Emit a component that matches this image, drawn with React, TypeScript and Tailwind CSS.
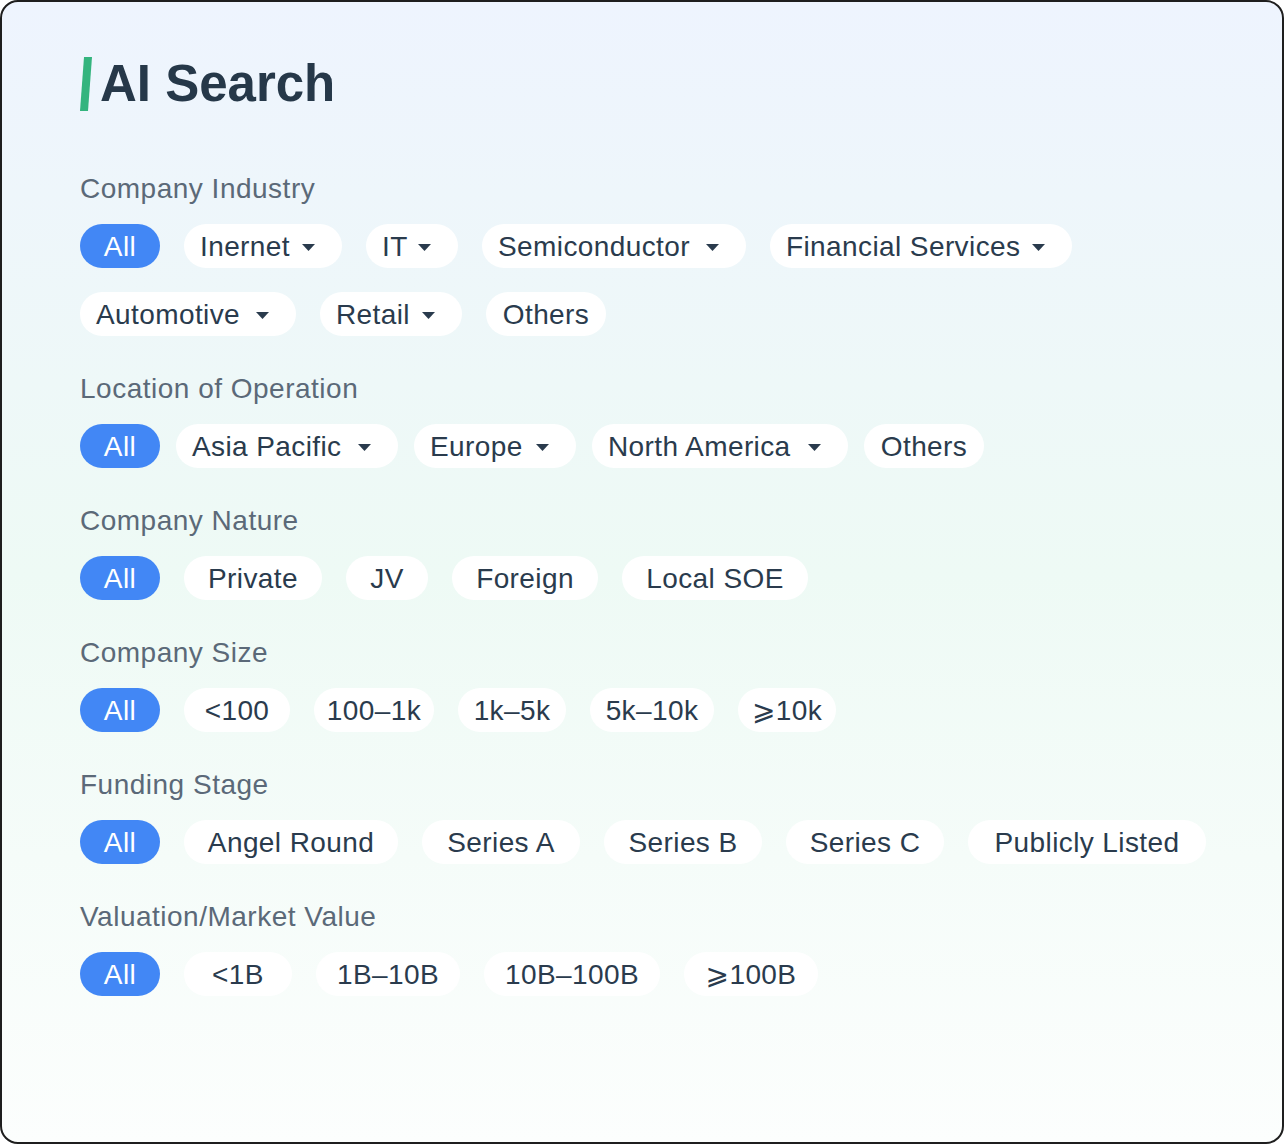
import React from 'react';

type Chip = { label: string; w: string; drop?: boolean; active?: boolean };
type Section = { title: string; gap: string; chips: Chip[] };

const sections: Section[] = [
  {
    title: 'Company Industry',
    gap: 'gap-6',
    chips: [
      { label: 'All', w: 'w-[80px]', active: true },
      { label: 'Inernet', w: 'w-[158px]', drop: true },
      { label: 'IT', w: 'w-[92px]', drop: true },
      { label: 'Semiconductor', w: 'w-[264px]', drop: true },
      { label: 'Financial Services', w: 'w-[302px]', drop: true },
      { label: 'Automotive', w: 'w-[216px]', drop: true },
      { label: 'Retail', w: 'w-[142px]', drop: true },
      { label: 'Others', w: 'w-[120px]' },
    ],
  },
  {
    title: 'Location of Operation',
    gap: 'gap-x-4 gap-y-6',
    chips: [
      { label: 'All', w: 'w-[80px]', active: true },
      { label: 'Asia Pacific', w: 'w-[222px]', drop: true },
      { label: 'Europe', w: 'w-[162px]', drop: true },
      { label: 'North America', w: 'w-[256px]', drop: true },
      { label: 'Others', w: 'w-[120px]' },
    ],
  },
  {
    title: 'Company Nature',
    gap: 'gap-6',
    chips: [
      { label: 'All', w: 'w-[80px]', active: true },
      { label: 'Private', w: 'w-[138px]' },
      { label: 'JV', w: 'w-[82px]' },
      { label: 'Foreign', w: 'w-[146px]' },
      { label: 'Local SOE', w: 'w-[186px]' },
    ],
  },
  {
    title: 'Company Size',
    gap: 'gap-6',
    chips: [
      { label: 'All', w: 'w-[80px]', active: true },
      { label: '<100', w: 'w-[106px]' },
      { label: '100–1k', w: 'w-[120px]' },
      { label: '1k–5k', w: 'w-[108px]' },
      { label: '5k–10k', w: 'w-[124px]' },
      { label: '⩾10k', w: 'w-[98px]' },
    ],
  },
  {
    title: 'Funding Stage',
    gap: 'gap-6',
    chips: [
      { label: 'All', w: 'w-[80px]', active: true },
      { label: 'Angel Round', w: 'w-[214px]' },
      { label: 'Series A', w: 'w-[158px]' },
      { label: 'Series B', w: 'w-[158px]' },
      { label: 'Series C', w: 'w-[158px]' },
      { label: 'Publicly Listed', w: 'w-[238px]' },
    ],
  },
  {
    title: 'Valuation/Market Value',
    gap: 'gap-6',
    chips: [
      { label: 'All', w: 'w-[80px]', active: true },
      { label: '<1B', w: 'w-[108px]' },
      { label: '1B–10B', w: 'w-[144px]' },
      { label: '10B–100B', w: 'w-[176px]' },
      { label: '⩾100B', w: 'w-[134px]' },
    ],
  },
];

function Caret() {
  return (
    <svg width="13" height="7" viewBox="0 0 13 7" className="shrink-0">
      <path d="M0 0 H13 L6.5 7 Z" fill="#2a3b4d" />
    </svg>
  );
}

function FilterChip({ chip }: { chip: Chip }) {
  if (chip.active) {
    return (
      <button
        className={`${chip.w} h-[44px] pt-[2px] rounded-full bg-[#4287f5] text-white flex items-center justify-center`}
      >
        {chip.label}
      </button>
    );
  }
  if (chip.drop) {
    return (
      <button
        className={`${chip.w} h-[44px] pt-[2px] rounded-full bg-white text-[#2a3b4d] flex items-center justify-between pl-4 pr-[27px]`}
      >
        <span className="whitespace-nowrap">{chip.label}</span>
        <Caret />
      </button>
    );
  }
  return (
    <button
      className={`${chip.w} h-[44px] pt-[2px] rounded-full bg-white text-[#2a3b4d] flex items-center justify-center whitespace-nowrap`}
    >
      {chip.label}
    </button>
  );
}

export default function App() {
  return (
    <div
      className="w-[1284px] h-[1144px] rounded-[18px] border-2 border-[#1e1e1e] bg-gradient-to-b from-[#eef4fe] via-[#eefaf5] to-[#fcfefd] overflow-hidden"
      style={{ fontFamily: '"Liberation Sans", Arial, "DejaVu Sans", sans-serif' }}
    >
      <div className="pl-[78px] pr-[58px] pt-[55px]">
        {/* title */}
        <div className="flex items-center h-[54px] gap-[8px]">
          <svg width="12" height="54" viewBox="0 0 12 54" className="shrink-0">
            <polygon points="4,0 12,0 8,54 0,54" fill="#34b47e" />
          </svg>
          <h1 className="text-[51px] leading-[54px] font-bold text-[#263849]">AI Search</h1>
        </div>

        <div className="mt-[59px] flex flex-col gap-[34px]">
          {sections.map((s) => (
            <div key={s.title}>
              <div className="h-[36px] leading-[38px] text-[28px] text-[#5b6978] tracking-[0.5px]">
                {s.title}
              </div>
              <div className={`mt-[18px] flex flex-wrap ${s.gap} text-[28px] tracking-[0.4px]`}>
                {s.chips.map((c) => (
                  <FilterChip key={c.label} chip={c} />
                ))}
              </div>
            </div>
          ))}
        </div>
      </div>
    </div>
  );
}
